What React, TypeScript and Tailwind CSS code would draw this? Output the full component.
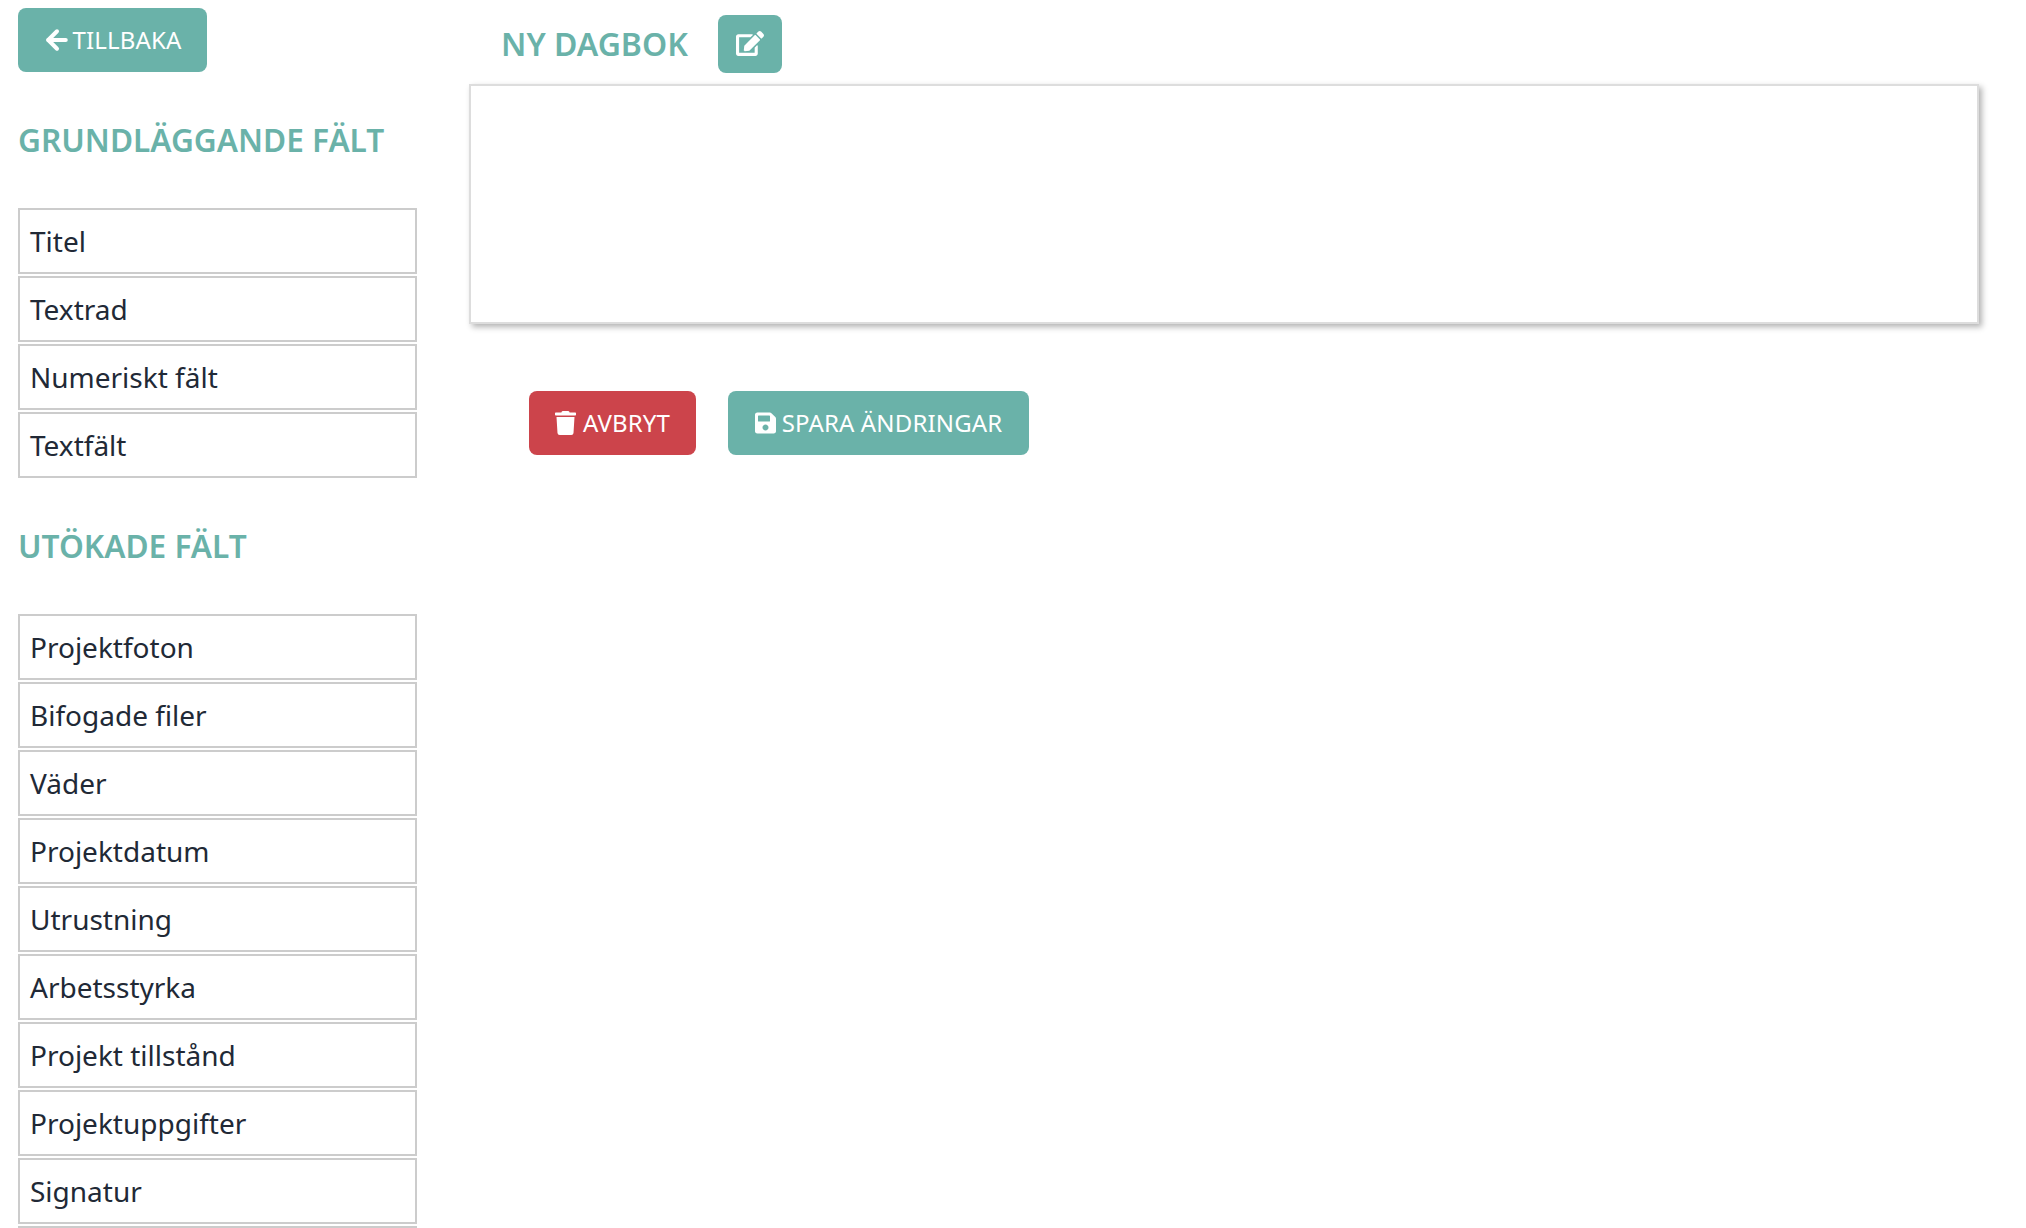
import React from 'react';
import { ArrowLeft } from 'lucide-react';

const basicFields = ['Titel', 'Textrad', 'Numeriskt fält', 'Textfält'];
// last row only shows its top border above the fold
const extendedFields = [
  'Projektfoton',
  'Bifogade filer',
  'Väder',
  'Projektdatum',
  'Utrustning',
  'Arbetsstyrka',
  'Projekt tillstånd',
  'Projektuppgifter',
  'Signatur',
  '',
];

function TrashIcon() {
  return (
    <svg viewBox="0 0 448 512" className="w-[21px] h-[24px] fill-white">
      <path d="M432 32H312l-9.400-18.700A24 24 0 0 0 281.100 0H166.800a23.700 23.700 0 0 0-21.400 13.300L136 32H16A16 16 0 0 0 0 48v32a16 16 0 0 0 16 16h416a16 16 0 0 0 16-16V48a16 16 0 0 0-16-16zM53.200 467a48 48 0 0 0 47.900 45h245.800a48 48 0 0 0 47.900-45L416 128H32z" />
    </svg>
  );
}

function SaveIcon() {
  return (
    <svg viewBox="0 0 448 512" className="w-[21px] h-[24px] fill-white">
      <path d="M433.900 129.900l-83.900-83.900A48 48 0 0 0 316.100 32H48C21.500 32 0 53.500 0 80v352c0 26.500 21.500 48 48 48h352c26.500 0 48-21.500 48-48V163.900a48 48 0 0 0-14.100-34zM224 416c-35.300 0-64-28.700-64-64 0-35.300 28.700-64 64-64s64 28.700 64 64c0 35.300-28.700 64-64 64zm96-304.500V212c0 6.600-5.400 12-12 12H76c-6.600 0-12-5.400-12-12V108c0-6.600 5.400-12 12-12h228.500c3.200 0 6.200 1.300 8.500 3.500l3.500 3.500A12 12 0 0 1 320 111.500z" />
    </svg>
  );
}

function EditIcon() {
  return (
    <svg viewBox="0 0 576 512" className="w-[28px] h-[25px] fill-white">
      <path d="M402.600 83.200l90.200 90.200c3.800 3.800 3.800 10 0 13.800L274.400 405.600l-92.800 10.300c-12.400 1.400-22.900-9.100-21.500-21.500l10.300-92.800L388.800 83.200c3.800-3.800 10-3.800 13.800 0zm162-22.900l-48.800-48.800c-15.200-15.200-39.900-15.200-55.200 0l-35.400 35.400c-3.800 3.800-3.800 10 0 13.800l90.200 90.200c3.800 3.800 10 3.800 13.800 0l35.400-35.400c15.200-15.300 15.200-40 0-55.200zM384 346.200V448H64V128h229.800c3.200 0 6.200-1.300 8.500-3.500l40-40c7.600-7.600 2.200-20.500-8.500-20.500H48C21.500 64 0 85.500 0 112v352c0 26.500 21.500 48 48 48h352c26.500 0 48-21.500 48-48V306.200c0-10.700-12.900-16-20.500-8.500l-40 40c-2.200 2.300-3.500 5.300-3.500 8.500z" />
    </svg>
  );
}

function FieldList({ items }: { items: string[] }) {
  return (
    <div className="flex flex-col gap-[2px]">
      {items.map((item) => (
        <div key={item} className="h-[66px] shrink-0 flex items-center border-2 border-[#cccccc] pl-[10px] text-[28px] text-[#212936]">
          {item}
        </div>
      ))}
    </div>
  );
}

export default function App() {
  return (
    <div className="h-screen overflow-hidden bg-white flex font-['Noto_Sans',sans-serif]">
      <div className="w-[399px] ml-[18px] shrink-0 pt-[8px]">
        <button type="button" className="h-[64px] w-[189px] rounded-[8px] bg-[#6ab2a9] text-white text-[24px] tracking-[0.15px] flex items-center justify-center gap-[1px]">
          <ArrowLeft size={30} strokeWidth={3.2} className="-ml-[2px]" />
          TILLBAKA
        </button>
        <h2 className="mt-[47px] text-[31.6px] leading-[41px] font-semibold text-[#6ab2a9]">GRUNDLÄGGANDE FÄLT</h2>
        <div className="mt-[48px]">
          <FieldList items={basicFields} />
        </div>
        <h2 className="mt-[47px] text-[31.6px] leading-[41px] font-semibold text-[#6ab2a9]">UTÖKADE FÄLT</h2>
        <div className="mt-[48px]">
          <FieldList items={extendedFields} />
        </div>
      </div>
      <div className="ml-[52px] w-[1510px]">
        <div className="h-[84px] pt-[3px] flex items-center pl-[32px] gap-[30px]">
          <h1 className="text-[32px] font-semibold text-[#6ab2a9]">NY DAGBOK</h1>
          <button type="button" className="w-[64px] h-[58px] rounded-[8px] bg-[#6ab2a9] flex items-center justify-center">
            <EditIcon />
          </button>
        </div>
        <div className="h-[240px] bg-white border-2 border-[#dddddd] shadow-[3px_3px_6px_rgba(0,0,0,0.3)]" />
        <div className="mt-[67px] ml-[60px] flex gap-[32px]">
          <button type="button" className="h-[64px] w-[167px] rounded-[8px] bg-[#cc444b] text-white text-[24px] tracking-[0.15px] flex items-center justify-center gap-[7px]">
            <TrashIcon />
            AVBRYT
          </button>
          <button type="button" className="h-[64px] w-[301px] rounded-[8px] bg-[#6ab2a9] text-white text-[24px] tracking-[0.15px] flex items-center justify-center gap-[6px]">
            <SaveIcon />
            SPARA ÄNDRINGAR
          </button>
        </div>
      </div>
    </div>
  );
}
